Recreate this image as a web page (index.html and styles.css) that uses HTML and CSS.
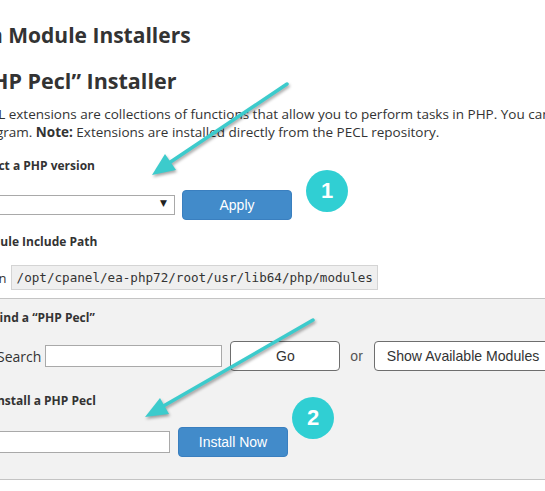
FILE: index.html
```html
<!DOCTYPE html>
<html>
<head>
<meta charset="utf-8">
<link rel="stylesheet" href="styles.css">
</head>
<body>
<div class="page">
  <h1 class="title"><span class="title-lead">n</span> Module Installers</h1>
  <h2 class="subtitle">“PHP Pecl” Installer</h2>
  <p class="intro">PECL extensions are collections of functions that allow you to perform tasks in PHP. You can use them in your<br>program. <b>Note:</b> Extensions are installed directly from the PECL repository.</p>

  <div class="label version-label">Select a PHP version</div>
  <div class="row version-row">
    <div class="select"><span class="select-arrow">▼</span></div>
    <button class="btn btn-primary btn-apply">Apply</button>
  </div>

  <div class="label path-label">Module Include Path</div>
  <div class="path-row">
    <span class="path-prefix">Located in</span>
    <code class="path-code">/opt/cpanel/ea-php72/root/usr/lib64/php/modules</code>
  </div>

  <div class="panel">
    <div class="label panel-label">Find a “PHP Pecl”</div>
    <div class="row search-row">
      <span class="search-label">Search</span>
      <input class="text-input search-input" type="text">
      <button class="btn btn-default btn-go">Go</button>
      <span class="or">or</span>
      <button class="btn btn-default btn-show">Show Available Modules</button>
    </div>
    <div class="label install-label">Install a PHP Pecl</div>
    <div class="row install-row">
      <input class="text-input install-input" type="text">
      <button class="btn btn-primary btn-install">Install Now</button>
    </div>
  </div>
</div>

<div class="step step-1">1</div>
<div class="step step-2">2</div>

<svg class="arrows" width="545" height="491" viewBox="0 0 545 491">
  <g class="arrow">
    <line x1="287" y1="84" x2="166" y2="165"/>
    <polygon points="152,175 176,170 165,154"/>
  </g>
  <g class="arrow">
    <line x1="313" y1="320" x2="160" y2="408"/>
    <polygon points="145,417 169,414 160,398"/>
  </g>
</svg>
</body>
</html>
```
FILE: styles.css
```css
html, body {
  margin: 0;
  padding: 0;
}
body {
  width: 545px;
  height: 491px;
  overflow: hidden;
  position: relative;
  background: #fff;
  color: #333;
  font-family: "Open Sans", "Liberation Sans", sans-serif;
}
.page {
  margin-left: -26px;
  width: 700px;
}
.title {
  font-size: 21px;
  font-weight: 700;
  line-height: 24px;
  margin: 23px 0 0 0;
  padding-left: 22px;
  color: #333;
  white-space: nowrap;
}
.title-lead {
  margin-left: -7px;
}
.subtitle {
  font-size: 21.5px;
  font-weight: 700;
  line-height: 28px;
  margin: 20px 0 0 -5px;
  white-space: nowrap;
}
.intro {
  font-size: 13.5px;
  line-height: 18px;
  margin: 10px 0 0 0;
  white-space: nowrap;
}
.label {
  font-size: 12px;
  font-weight: 700;
  line-height: 18px;
  white-space: nowrap;
}
.version-label {
  margin-top: 16px;
}
.row {
  display: flex;
  align-items: center;
}
.version-row {
  margin-top: 15px;
  height: 30px;
}
.select {
  width: 199px;
  height: 18px;
  border: 1px solid #a9a9a9;
  background: #fff;
  position: relative;
  box-sizing: content-box;
}
.select-arrow {
  position: absolute;
  right: 7px;
  top: 2px;
  font-size: 9px;
  color: #222;
  font-family: "DejaVu Sans", sans-serif;
}
.btn {
  font-family: "Liberation Sans", Arial, sans-serif;
  font-size: 14px;
  height: 30px;
  border-radius: 4px;
  box-sizing: border-box;
  padding: 0;
  white-space: nowrap;
  flex-shrink: 0;
}
.btn-primary {
  background: #428bca;
  border: 1px solid #3a7fbf;
  color: #fff;
}
.btn-default {
  background: #fff;
  border: 1px solid #6e6e6e;
  color: #333;
}
.btn-apply {
  width: 110px;
  margin-left: 7px;
}
.path-label {
  margin-top: 13px;
}
.path-row {
  display: flex;
  align-items: center;
  margin-top: 14px;
  font-size: 13px;
  white-space: nowrap;
}
.path-prefix {
  margin-left: -30px;
  margin-right: 4px;
}
.path-code {
  display: inline-block;
  font-family: "DejaVu Sans Mono", "Liberation Mono", monospace;
  font-size: 12.6px;
  line-height: 23px;
  padding: 0 4px 0 5px;
  background: #efefef;
  border: 1px solid #d4d4d4;
  color: #333;
}
.panel {
  margin-top: 8px;
  border-top: 1px solid #c4c4c4;
  border-bottom: 1px solid #c4c4c4;
  background: #f2f2f2;
  padding: 10px 0 22px 19px;
}
.search-row {
  margin-top: 14px;
  height: 30px;
}
.search-label {
  font-size: 14px;
  margin-left: 4px;
  margin-right: 4px;
}
.text-input {
  height: 22px;
  box-sizing: border-box;
  border: 1px solid #a9a9a9;
  background: #fff;
  padding: 0;
  margin: 0;
  flex-shrink: 0;
}
.search-input {
  width: 177px;
}
.btn-go {
  width: 110px;
  margin-left: 8px;
}
.or {
  font-family: "Liberation Sans", Arial, sans-serif;
  font-size: 14px;
  margin-left: 10px;
  margin-right: 11px;
  color: #555;
}
.btn.btn-show {
  font-size: 14.1px;
  width: 190px;
  padding: 0 0 0 12px;
  text-align: left;
}
.install-label {
  margin-top: 21px;
}
.install-row {
  margin-top: 17px;
  height: 30px;
}
.install-input {
  width: 200px;
  margin-left: -23px;
}
.btn-install {
  width: 110px;
  margin-left: 8px;
}
.step {
  position: absolute;
  width: 42px;
  height: 42px;
  border-radius: 50%;
  background: #30cfd3;
  color: #fff;
  font-family: "Liberation Sans", Arial, sans-serif;
  font-weight: 700;
  font-size: 22px;
  line-height: 42px;
  text-align: center;
}
.step-1 {
  left: 306px;
  top: 170px;
}
.step-2 {
  left: 292px;
  top: 397px;
}
.arrows {
  position: absolute;
  left: 0;
  top: 0;
  pointer-events: none;
}
.arrow {
  filter: drop-shadow(1px 2px 1.5px rgba(0, 0, 0, 0.35));
}
.arrow line {
  stroke: #3ccbcc;
  stroke-width: 3.5;
  stroke-linecap: round;
}
.arrow polygon {
  fill: #3ccbcc;
}
```
